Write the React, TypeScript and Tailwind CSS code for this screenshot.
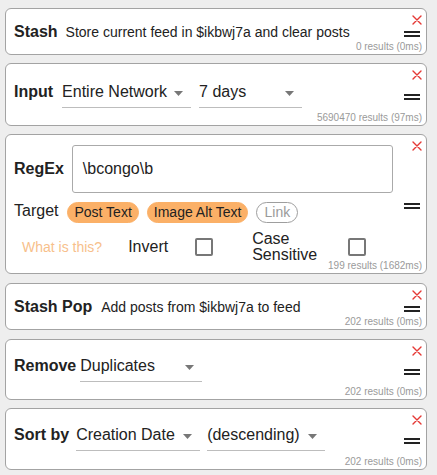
import React from 'react';

const font = { fontFamily: '"Liberation Sans", Arial, sans-serif' };

const CloseX = () => (
  <svg width="10" height="10" viewBox="0 0 10 10" className="absolute top-[6px] right-[4px]">
    <path d="M1 1 L9 9 M9 1 L1 9" stroke="#e53935" strokeWidth="1.4" strokeLinecap="round" />
  </svg>
);

const Handle = () => (
  <div className="absolute right-[6px] top-1/2 -translate-y-1/2 mt-[2px] flex flex-col gap-[2px]">
    <div className="h-[2px] w-[16px] bg-[#222]" />
    <div className="h-[2px] w-[16px] bg-[#222]" />
  </div>
);

const Results = ({ text }: { text: string }) => (
  <div className="absolute right-[4px] bottom-[1px] text-[10px] leading-[12px] text-[#9a9a9a]">{text}</div>
);

interface CardProps {
  results: string;
  className: string;
  children: React.ReactNode;
}

const Card: React.FC<CardProps> = ({ results, className, children }) => (
  <div className={`relative w-[422px] bg-white border border-[#a3a3a3] rounded-[6px] pl-[8px] pr-[33px] ${className}`}>
    {children}
    <CloseX />
    <Handle />
    <Results text={results} />
  </div>
);

const Caret = () => (
  <svg width="9" height="5" viewBox="0 0 9 5" className="mt-[2px]">
    <polygon points="0,0 9,0 4.5,5" fill="#777" />
  </svg>
);

const Select = ({ value, width, className = '' }: { value: string; width: string; className?: string }) => (
  <div className={`${width} ${className} border-b border-[#bdbdbd] pb-[6px]`}>
    <div className="h-[18px] flex items-center justify-between pr-[8px] text-[16px] leading-[18px] text-[#222]">
      <span>{value}</span>
      <Caret />
    </div>
  </div>
);

const Checkbox = ({ className = '' }: { className?: string }) => (
  <div className={`w-[18px] h-[18px] border-2 border-[#777] rounded-[2px] ${className}`} />
);

const Chip = ({ label, active }: { label: string; active: boolean }) => (
  <span
    className={`h-[21px] px-[6px] rounded-full border text-[14px] leading-[19px] ${
      active ? 'bg-[#fbb067] border-[#fbb067] text-[#222]' : 'bg-white border-[#9e9e9e] text-[#9a9a9a] px-[7px]'
    }`}
  >
    {label}
  </span>
);

export default function App() {
  return (
    <div className="min-h-[475px] bg-[#eeeeee] pl-[5px] pt-[8px] text-[#222]" style={font}>
      {/* Stash */}
      <Card results="0 results (0ms)" className="pt-[14px] pb-[13px] mb-[8px]">
        <div className="flex items-center h-[18px]">
          <span className="font-bold text-[16px] leading-[18px]">Stash</span>
          <span className="ml-[8px] text-[14px] leading-[18px]">Store current feed in $ikbwj7a and clear posts</span>
        </div>
      </Card>

      {/* Input */}
      <Card results="5690470 results (97ms)" className="pt-[19px] pb-[17px] mb-[8px]">
        <div className="flex items-start">
          <span className="font-bold text-[16px] leading-[18px]">Input</span>
          <Select value="Entire Network" width="w-[129px]" className="ml-[9px]" />
          <Select value="7 days" width="w-[103px]" className="ml-[8px]" />
        </div>
      </Card>

      {/* RegEx */}
      <Card results="199 results (1682ms)" className="pt-[10px] pb-[10px] mb-[9px]">
        <div className="flex items-center">
          <span className="font-bold text-[16px] leading-[18px]">RegEx</span>
          <div className="ml-[8px] w-[322px] h-[48px] border border-[#aaa] rounded-[3px] pl-[10px] flex items-center text-[16px]">
            \bcongo\b
          </div>
        </div>
        <div className="mt-[9px] flex items-center h-[21px]">
          <span className="text-[16px] leading-[18px] mb-[3px]">Target</span>
          <div className="ml-[9px] flex items-center gap-[8px]">
            <Chip label="Post Text" active />
            <Chip label="Image Alt Text" active />
            <Chip label="Link" active={false} />
          </div>
        </div>
        <div className="mt-[8px] flex items-center h-[32px]">
          <span className="ml-[8px] text-[14px] text-[#f7bf8c]">What is this?</span>
          <span className="ml-[26px] text-[16px]">Invert</span>
          <Checkbox className="ml-[27px]" />
          <span className="ml-[39px] text-[16px] leading-[16px]">
            Case
            <br />
            Sensitive
          </span>
          <Checkbox className="ml-[31px]" />
        </div>
      </Card>

      {/* Stash Pop */}
      <Card results="202 results (0ms)" className="pt-[14px] pb-[13px] mb-[9px]">
        <div className="flex items-center h-[18px]">
          <span className="font-bold text-[16px] leading-[18px]">Stash Pop</span>
          <span className="ml-[9px] text-[14px] leading-[18px]">Add posts from $ikbwj7a to feed</span>
        </div>
      </Card>

      {/* Remove */}
      <Card results="202 results (0ms)" className="pt-[17px] pb-[17px] mb-[8px]">
        <div className="flex items-start">
          <span className="font-bold text-[16px] leading-[18px]">Remove</span>
          <Select value="Duplicates" width="w-[122px]" className="ml-[4px]" />
        </div>
      </Card>

      {/* Sort by */}
      <Card results="202 results (0ms)" className="pt-[17px] pb-[18px]">
        <div className="flex items-start">
          <span className="font-bold text-[16px] leading-[18px]">Sort by</span>
          <Select value="Creation Date" width="w-[124px]" className="ml-[7px]" />
          <Select value="(descending)" width="w-[118px]" className="ml-[7px]" />
        </div>
      </Card>
    </div>
  );
}
